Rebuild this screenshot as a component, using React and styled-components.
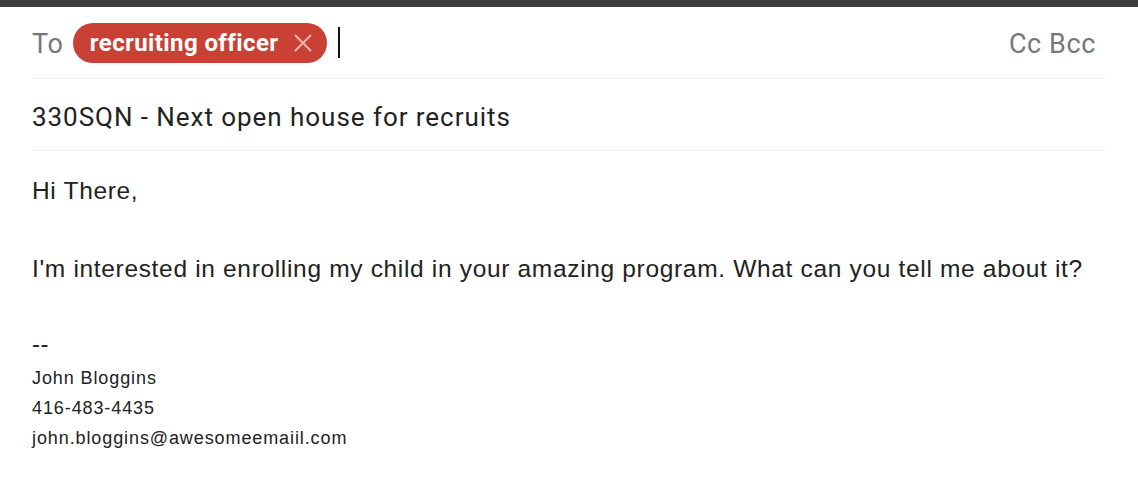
import React from "react";
import styled, { createGlobalStyle } from "styled-components";

const GlobalStyle = createGlobalStyle`
    body {
        margin: 0;
        background: #fff;
        font-family: Roboto, "Liberation Sans", sans-serif;
    }
`;

const Compose = () => {
    return (
        <>
            <GlobalStyle />
            <TopBar />
            <Window>
                <Row>
                    <Label>To</Label>
                    <Chip>
                        recruiting officer
                        <svg width="20" height="20" viewBox="0 0 20 20">
                            <path d="M2 2L18 18M18 2L2 18" stroke="#f2b3ac" strokeWidth="2" />
                        </svg>
                    </Chip>
                    <Caret />
                    <Extra>Cc Bcc</Extra>
                </Row>
                <Row>
                    <Subject>330SQN - Next open house for recruits</Subject>
                </Row>
                <Body>
                    <Para>Hi There,</Para>
                    <Para>I'm interested in enrolling my child in your amazing program. What can you tell me about it?</Para>
                    <Signature>
                        <Dashes>--</Dashes>
                        <div>John Bloggins</div>
                        <div>416-483-4435</div>
                        <div>john.bloggins@awesomeemaiil.com</div>
                    </Signature>
                </Body>
            </Window>
        </>
    );
};

const TopBar = styled.div`
    height: 7px;
    background: #3e3e3e;
`;

const Window = styled.div`
    padding: 0 32px;
`;

const Row = styled.div`
    height: 71px;
    display: flex;
    align-items: center;
    border-bottom: 1.5px solid #ededed;
`;

const Label = styled.span`
    font-size: 27px;
    letter-spacing: 0.8px;
    color: #777;
    margin-right: 9px;
    margin-top: 2px;
`;

const Chip = styled.span`
    display: flex;
    align-items: center;
    gap: 14px;
    height: 40px;
    padding: 0 14px 0 17px;
    border-radius: 20px;
    background: #c94135;
    color: #fff;
    font-size: 24px;
    letter-spacing: 0.4px;
    font-weight: 700;
`;

const Caret = styled.span`
    width: 2px;
    height: 31px;
    background: #111;
    margin-left: 11px;
`;

const Extra = styled.span`
    margin-left: auto;
    font-size: 27px;
    letter-spacing: 0.6px;
    color: #777;
    margin-right: 10px;
    margin-top: 2px;
`;

const Subject = styled.span`
    font-size: 26px;
    letter-spacing: 0.95px;
    color: #222;
    margin-top: 5px;
`;

const Body = styled.div`
    padding-top: 25px;
    font-family: "Liberation Sans", Arial, sans-serif;
    color: #222;
`;

const Para = styled.p`
    font-size: 24.5px;
    letter-spacing: 0.67px;
    line-height: 30px;
    margin: 0 0 48px;
`;

const Signature = styled.div`
    font-size: 18px;
    letter-spacing: 0.9px;
    line-height: 30px;
    margin-top: -3px;
`;

const Dashes = styled.div`
    font-size: 24px;
    letter-spacing: 0.5px;
    line-height: 30px;
    margin-bottom: 4px;
`;

export default Compose;
